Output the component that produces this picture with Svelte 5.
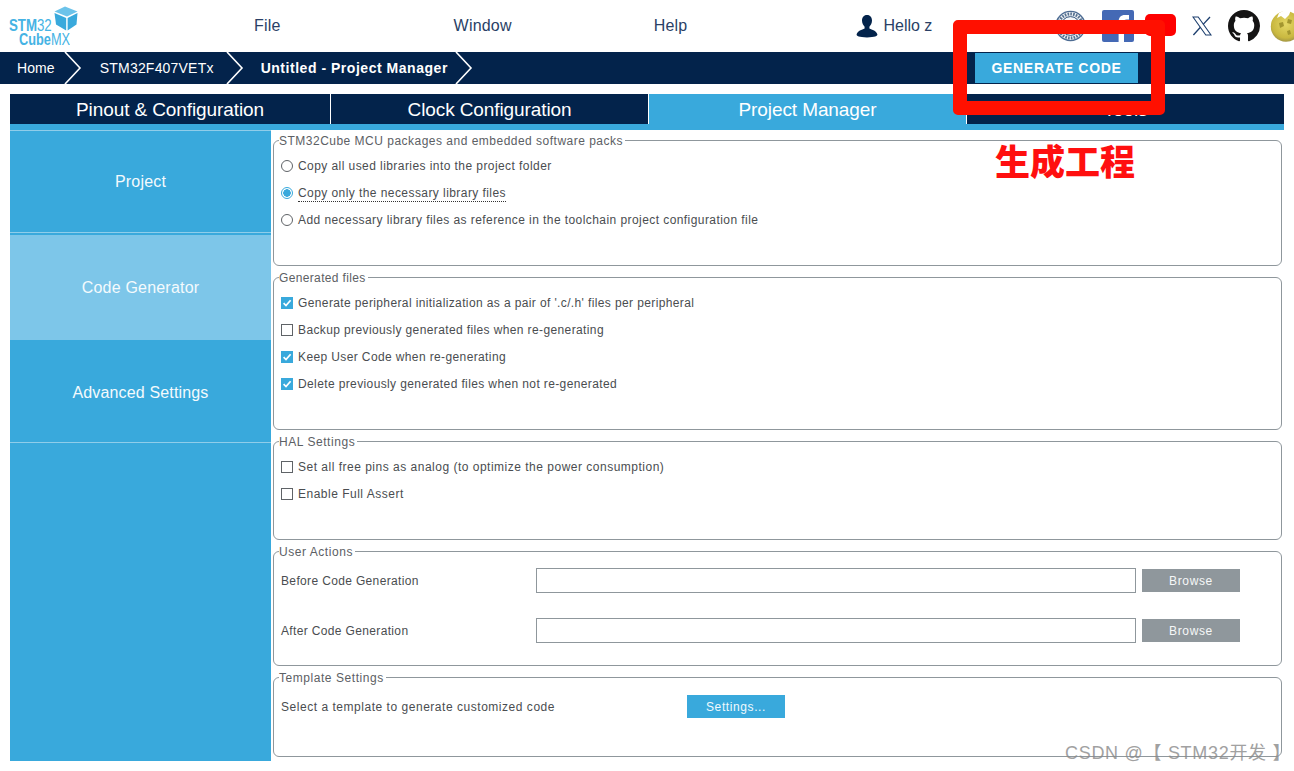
<script>
  const tabs = ['Pinout & Configuration', 'Clock Configuration', 'Project Manager', 'Tools'];
  const sides = [
    { label: 'Project', cls: 'first' },
    { label: 'Code Generator', cls: 'active' },
    { label: 'Advanced Settings', cls: 'third' }
  ];
  const radios = [
    { label: 'Copy all used libraries into the project folder', on: false },
    { label: 'Copy only the necessary library files', on: true },
    { label: 'Add necessary library files as reference in the toolchain project configuration file', on: false }
  ];
  const generated = [
    { label: "Generate peripheral initialization as a pair of '.c/.h' files per peripheral", on: true },
    { label: 'Backup previously generated files when re-generating', on: false },
    { label: 'Keep User Code when re-generating', on: true },
    { label: 'Delete previously generated files when not re-generated', on: true }
  ];
  const hal = [
    { label: 'Set all free pins as analog (to optimize the power consumption)', on: false },
    { label: 'Enable Full Assert', on: false }
  ];
  const actions = ['Before Code Generation', 'After Code Generation'];
</script>

{#snippet chevron()}
  <svg class="chev" width="18" height="32" viewBox="0 0 18 32"><path d="M1 0 L16 16 L1 32" fill="none" stroke="#fff" stroke-width="1.6" /></svg>
{/snippet}

{#snippet check(item)}
  <div class="row">
    <span class="box" class:on={item.on}>
      {#if item.on}
        <svg width="12" height="12" viewBox="0 0 12 12"><path d="M2.6 6.2 L5 8.6 L9.6 3.2" fill="none" stroke="#fff" stroke-width="1.7" /></svg>
      {/if}
    </span>
    <span>{item.label}</span>
  </div>
{/snippet}

<header class="top">
  <div class="logo">
    <div class="logo-line one"><b>STM</b>32</div>
    <div class="logo-line two"><b>Cube</b>MX</div>
    <svg class="cube" width="24" height="25" viewBox="0 0 24 25">
      <path d="M11 0.5 L23.5 5.5 L13 10.5 L0.5 5.5 Z" fill="#6cc3ea" />
      <path d="M0.5 7 L12.2 12 L12.2 24.5 L2 18.5 Z" fill="#39a9dc" />
      <path d="M13.6 12 L23.5 7 L22.5 18.5 L13.6 24.5 Z" fill="#39a9dc" />
    </svg>
  </div>
  <nav class="menu">
    <span class="file">File</span>
    <span class="window">Window</span>
    <span class="help">Help</span>
  </nav>
  <div class="user">
    <svg width="22" height="24" viewBox="0 0 22 24">
      <path d="M11 1 C7.6 1 6 3.6 6 6.6 C6 9.4 7.4 11.6 8.6 12.8 L8.6 14.4 C6 15.8 1.4 16.6 0.6 20.6 C0.4 22 3 23.4 11 23.4 C19 23.4 21.6 22 21.4 20.6 C20.6 16.6 16 15.8 13.4 14.4 L13.4 12.8 C14.6 11.6 16 9.4 16 6.6 C16 3.6 14.4 1 11 1 Z" fill="#03234b" />
    </svg>
    <span>Hello z</span>
  </div>
  <div class="icons">
    <svg class="seal" width="31" height="32" viewBox="0 0 31 32">
      <circle cx="15.5" cy="16" r="14.6" fill="#eef1f5" stroke="#4d6c93" stroke-width="1.4" />
      <circle cx="15.5" cy="16" r="12" fill="none" stroke="#55708f" stroke-width="3" stroke-dasharray="1.6 1.2" />
      <circle cx="15.5" cy="16" r="9.4" fill="#f4f6f8" stroke="#33547e" stroke-width="1" />
      <circle cx="15.5" cy="16" r="5.5" fill="#5d7ea3" />
    </svg>
    <svg class="fb" width="32" height="32" viewBox="0 0 32 32">
      <rect width="32" height="32" rx="2" fill="#4469b5" />
      <path d="M22 32 V20 H26 L26.6 15 H22 V12 C22 10.4 22.6 9.6 24.4 9.6 H27 V5 H23 C18.8 5 16.6 7.6 16.6 11.6 V15 H13 V20 H16.6 V32 Z" fill="#fff" />
    </svg>
    <svg class="yt" width="31" height="22" viewBox="0 0 31 22">
      <rect width="31" height="22" rx="5" fill="#fe0000" />
    </svg>
    <svg class="x" width="20" height="20" viewBox="0 0 20 20">
      <path d="M1 1 H6.2 L19 19 H13.8 Z" fill="none" stroke="#1d3f6e" stroke-width="1.1" />
      <path d="M18 1 L11.2 8.4 M8.4 11.2 L1.4 19" fill="none" stroke="#1d3f6e" stroke-width="1.3" />
    </svg>
    <svg class="gh" width="32" height="32" viewBox="0 0 16 16">
      <path fill="#151414" d="M8 0C3.58 0 0 3.58 0 8c0 3.54 2.29 6.53 5.47 7.59.4.07.55-.17.55-.38 0-.19-.01-.82-.01-1.49-2.01.37-2.53-.49-2.69-.94-.09-.23-.48-.94-.82-1.13-.28-.15-.68-.52-.01-.53.63-.01 1.08.58 1.23.82.72 1.21 1.87.87 2.33.66.07-.52.28-.87.51-1.07-1.78-.2-3.64-.89-3.64-3.95 0-.87.31-1.59.82-2.15-.08-.2-.36-1.02.08-2.12 0 0 .67-.21 2.2.82.64-.18 1.32-.27 2-.27s1.36.09 2 .27c1.53-1.04 2.2-.82 2.2-.82.44 1.1.16 1.92.08 2.12.51.56.82 1.27.82 2.15 0 3.07-1.87 3.75-3.65 3.95.29.25.54.73.54 1.48 0 1.07-.01 1.93-.01 2.2 0 .21.15.46.55.38A8.01 8.01 0 0 0 16 8c0-4.42-3.58-8-8-8z" />
    </svg>
    <svg class="wiki" width="32" height="32" viewBox="0 0 32 32">
      <defs>
        <radialGradient id="globe" cx="0.5" cy="0.42" r="0.65">
          <stop offset="0" stop-color="#e4d765" />
          <stop offset="0.7" stop-color="#c9b840" />
          <stop offset="1" stop-color="#8f8546" />
        </radialGradient>
      </defs>
      <circle cx="16" cy="16.5" r="15.2" fill="url(#globe)" />
      <path d="M15 0 L21 0 L19 5 L15 9 L11 6 L7 8 L9 3 Z" fill="#fff" />
      <path d="M9 13 L13 12 L14 16 L10 18 Z M18 9 L22 10 L21 14 L17 13 Z M17 21 L20 20 L21 24 L18 25 Z" fill="#a3962f" />
    </svg>
  </div>
</header>

<div class="crumbs">
  <span class="home">Home</span>
  {@render chevron()}
  <span class="chip">STM32F407VETx</span>
  {@render chevron()}
  <strong class="current">Untitled - Project Manager</strong>
  {@render chevron()}
  <button class="generate">GENERATE CODE</button>
</div>

<div class="tabs">
  {#each tabs as tab}
    <div class="tab" class:selected={tab === 'Project Manager'}>{tab}</div>
  {/each}
</div>

<div class="body">
  <aside class="side">
    {#each sides as s}
      <div class="side-item {s.cls}"><span>{s.label}</span></div>
    {/each}
  </aside>

  <main class="panels">
    <fieldset class="p1">
      <legend>STM32Cube MCU packages and embedded software packs</legend>
      {#each radios as r}
        <div class="row">
          <span class="radio" class:on={r.on}></span>
          <span class:dotted={r.on}>{r.label}</span>
        </div>
      {/each}
    </fieldset>

    <fieldset class="p2">
      <legend>Generated files</legend>
      {#each generated as item}
        {@render check(item)}
      {/each}
    </fieldset>

    <fieldset class="p3">
      <legend>HAL Settings</legend>
      {#each hal as item}
        {@render check(item)}
      {/each}
    </fieldset>

    <fieldset class="p4">
      <legend>User Actions</legend>
      {#each actions as a}
        <div class="action">
          <span class="action-label">{a}</span>
          <input type="text" />
          <button class="browse">Browse</button>
        </div>
      {/each}
    </fieldset>

    <fieldset class="p5">
      <legend>Template Settings</legend>
      <div class="template">
        <span class="template-label">Select a template to generate customized code</span>
        <button class="settings">Settings...</button>
      </div>
    </fieldset>
  </main>
</div>

<!-- annotation drawn over the screenshot -->
<div class="mark"></div>
<div class="mark-text">生成工程</div>
<div class="watermark">CSDN @【 STM32开发 】</div>

<style>
  :global(body) {
    margin: 0;
    background: #fff;
    overflow: hidden;
    font-family: "Liberation Sans", Arial, sans-serif;
    color: #4a4d50;
  }

  .top { height: 52px; display: flex; align-items: center; position: relative; overflow: hidden; }

  .logo { position: relative; width: 78px; height: 52px; flex: none; color: #45b3e4; }
  .logo-line { position: absolute; font-size: 17px; line-height: 14px; white-space: nowrap; transform-origin: left center; }
  .logo-line b { font-weight: 700; }
  .one { left: 9px; top: 19px; transform: scaleX(0.78); }
  .two { left: 19px; top: 33px; transform: scaleX(0.75); }
  .cube { position: absolute; left: 54px; top: 6px; }

  .menu { display: flex; font-size: 16px; letter-spacing: 0.2px; color: #2a3f66; margin-left: 176px; }
  .window { margin-left: 173px; }
  .help { margin-left: 142px; }

  .user { display: flex; align-items: center; gap: 5px; font-size: 16px; color: #2a3f66; margin-left: 169px; }

  .icons { position: absolute; left: 1055px; top: 10px; display: flex; align-items: flex-start; }
  .icons svg { flex: none; }
  .fb { margin-left: 16px; }
  .yt { margin-left: 11px; margin-top: 4px; }
  .x { margin-left: 16px; margin-top: 6px; }
  .gh { margin-left: 16px; }
  .wiki { margin-left: 10px; }

  .crumbs { height: 32px; background: #03234b; color: #fff; display: flex; align-items: center; font-size: 14px; position: relative; }
  .chev { flex: none; }
  .home { margin-left: 17px; margin-right: 9px; letter-spacing: 0.1px; }
  .chip { margin-left: 18px; margin-right: 12px; letter-spacing: 0.2px; }
  .current { margin-left: 17px; margin-right: 7px; letter-spacing: 0.53px; }
  .generate {
    position: absolute; left: 975px; top: 1px;
    width: 163px; height: 30px;
    background: #39a9dc; color: #fff; border: none; padding: 0;
    font: 700 14px "Liberation Sans", sans-serif; letter-spacing: 0.7px;
  }

  .tabs { margin: 10px 10px 0; height: 30px; display: flex; background: #03234b; border-bottom: 6px solid #39a9dc; }
  .tab { width: 318px; color: #fff; font-size: 19px; letter-spacing: -0.1px; line-height: 32px; height: 30px; overflow: hidden; text-align: center; border-left: 1px solid #fff; box-sizing: border-box; }
  .tab:first-child { width: 320px; border-left: none; }
  .tab:last-child { flex: 1; }
  .tab.selected { background: #39a9dc; }

  .body { display: flex; margin: 0 10px; height: 631px; }

  .side { width: 261px; flex: none; background: #39a9dc; display: flex; flex-direction: column; }
  .side-item { color: #f4fafd; font-size: 16px; letter-spacing: 0.2px; display: flex; align-items: center; justify-content: center; box-sizing: border-box; }
  .first { height: 103px; border-top: 1px solid #8fcdea; border-bottom: 1px solid #8fcdea; margin-bottom: 2px; }
  .first span { margin-top: 1px; }
  .active { height: 105px; background: #7dc6e9; }
  .third { height: 103px; border-bottom: 1px solid #8fcdea; letter-spacing: 0.15px; }
  .third span { margin-top: 3px; }

  .panels { flex: 1; padding: 3px 2px 0; display: flex; flex-direction: column; gap: 4px; font-size: 12px; letter-spacing: 0.35px; }

  fieldset { margin: 0; padding: 5px 7px 0; border: 1px solid #8f979c; border-radius: 6px; box-sizing: border-box; min-width: 0; }
  legend { margin-left: -2px; padding: 2px 2px 0 0; line-height: 12px; color: #5c6064; font-size: 12px; letter-spacing: 0.55px; }
  .p1 { height: 133px; letter-spacing: 0.43px; }
  .p1 legend { letter-spacing: 0.49px; }
  .p2 { height: 160px; letter-spacing: 0.38px; }
  .p2 legend { letter-spacing: 0.35px; }
  .p3 { height: 106px; letter-spacing: 0.5px; }
  .p4 { height: 122px; padding-top: 10px; }
  .p5 { height: 87px; padding-top: 11px; letter-spacing: 0.53px; }

  .row { height: 27px; display: flex; align-items: center; gap: 5px; }
  .radio { width: 12px; height: 12px; border: 1px solid #5f6367; border-radius: 50%; box-sizing: border-box; background: #fff; flex: none; }
  .radio.on { border-color: #39a9dc; background: radial-gradient(circle, #39a9dc 0 3.5px, #fff 4px); }
  .dotted { border-bottom: 1px dotted #333; line-height: 15px; margin-top: 3px; }
  .box { width: 12px; height: 12px; border: 1px solid #5f6367; box-sizing: border-box; background: #fff; flex: none; display: flex; align-items: center; justify-content: center; }
  .box.on { background: #39a9dc; border-color: #39a9dc; }
  .box svg { flex: none; }

  .action { height: 25px; display: flex; align-items: center; margin-bottom: 25px; }
  .action-label { width: 255px; flex: none; }
  .action input { width: 600px; height: 25px; box-sizing: border-box; border: 1px solid #8f979c; background: #fff; padding: 0; margin: 0; flex: none; }
  .browse { width: 98px; height: 23px; margin-left: 6px; background: #8f979c; color: #f6f7f8; border: none; padding: 0; font: 12px "Liberation Sans", sans-serif; letter-spacing: 0.65px; }

  .template { height: 23px; display: flex; align-items: center; }
  .template-label { width: 406px; flex: none; }
  .settings { width: 98px; height: 23px; background: #39a9dc; color: #f0f9fd; border: none; padding: 0; font: 12px "Liberation Sans", sans-serif; letter-spacing: 0.6px; }

  .mark { position: absolute; left: 953px; top: 20px; width: 212px; height: 95px; box-sizing: border-box; border: 14px solid #ff1000; border-radius: 5px; }
  .mark-text { position: absolute; left: 995px; top: 139px; font: 900 35px/42px "Noto Sans CJK SC", sans-serif; color: #ff0f0f; white-space: nowrap; }
  .watermark { position: absolute; left: 1065px; top: 742px; font: 18px/22px "Liberation Sans", "Noto Sans CJK SC", sans-serif; letter-spacing: 0.7px; color: #8a8a8a; opacity: 0.8; white-space: nowrap; }
</style>
